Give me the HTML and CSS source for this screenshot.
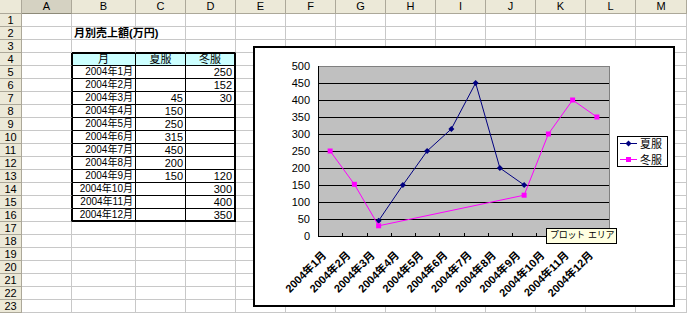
FILE: index.html
```html
<!DOCTYPE html>
<html lang="ja">
<head>
  <meta charset="UTF-8">
  <title>月別売上額</title>
  <link rel="stylesheet" href="styles.css">
</head>
<body>

  <div class="sheet" id="sheet"></div>

  <div class="chart">
    <svg id="plot" width="418" height="257"></svg>
    <div class="tip">プロット エリア</div>
  </div>

  <script src="script.js"></script>
</body>
</html>
```

FILE: styles.css
```css
* {
  box-sizing: border-box;
}

body {
  margin: 0;
  font-family: "Liberation Sans", "Noto Sans CJK JP", sans-serif;
  font-size: 11px;
  color: #000;
  background: #fff;
  overflow: hidden;
}

.sheet {
  display: grid;
  grid-template-columns: 22px 50px 64px repeat(10, 50px) 51px;
  grid-template-rows: 14px repeat(23, 13px);
}

.cell {
  border-right: 1px solid #c8c8c8;
  border-bottom: 1px solid #c8c8c8;
  line-height: 12px;
  padding: 0 2px;
  white-space: nowrap;
  overflow: hidden;
}

.corner,
.colhead,
.rowhead {
  background: #ece9d8;
  border-right: 1px solid #aca899;
  border-bottom: 1px solid #aca899;
  text-align: center;
  line-height: 12px;
}

.colhead.sel {
  background: #d5d2c2;
  border-bottom-color: #8d8a78;
}

.title {
  font-weight: bold;
  overflow: visible;
}

.num {
  text-align: right;
}

.date {
  font-size: 10px;
}

.head {
  background: #ccffff;
  text-align: center;
}

/* data block B4:D16 */
.tb {
  border-right-color: #000;
  border-bottom-color: #000;
}

.tl {
  box-shadow: inset 1px 0 0 #000;
}

.tt {
  box-shadow: inset 0 1px 0 #000;
}

.tl.tt {
  box-shadow: inset 1px 1px 0 #000;
}

.tr {
  border-right-width: 2px;
}

.tbot {
  border-bottom-width: 2px;
}

.edge-r {
  border-right-color: #000;
}

.edge-b {
  border-bottom-color: #000;
}

/* embedded chart object */
.chart {
  position: absolute;
  left: 253px;
  top: 46px;
  width: 422px;
  height: 261px;
  border: 2px solid #000;
  background: #fff;
}

.chart svg {
  display: block;
  font-family: "Liberation Sans", "Noto Sans CJK JP", sans-serif;
  font-size: 11px;
}

.chart .cat {
  font-weight: bold;
}

.tip {
  position: absolute;
  left: 291px;
  top: 180px;
  width: 71px;
  height: 16px;
  background: #ffffe1;
  border: 1px solid #000;
  font-size: 9px;
  letter-spacing: -0.3px;
  word-spacing: 1px;
  line-height: 13px;
  padding-left: 3px;
  white-space: nowrap;
}
```

FILE: script.js
```js
const COLS = ["A", "B", "C", "D", "E", "F", "G", "H", "I", "J", "K", "L", "M"];
const ROWS = 23;

const months = [];
for (let m = 1; m <= 12; m++) months.push("2004年" + m + "月");
const summer = [null, null, 45, 150, 250, 315, 450, 200, 150, null, null, null];
const winter = [250, 152, 30, null, null, null, null, null, 120, 300, 400, 350];

// cell contents
const cells = {
  B2: { text: "月別売上額(万円)", cls: "title" },
  B4: { text: "月", cls: "head" },
  C4: { text: "夏服", cls: "head" },
  D4: { text: "冬服", cls: "head" }
};
months.forEach((m, i) => {
  const r = i + 5;
  cells["B" + r] = { text: m, cls: "num date" };
  if (summer[i] !== null) cells["C" + r] = { text: summer[i], cls: "num" };
  if (winter[i] !== null) cells["D" + r] = { text: winter[i], cls: "num" };
});

const sheet = document.getElementById("sheet");

function add(text, cls) {
  const d = document.createElement("div");
  d.className = cls;
  d.textContent = text;
  sheet.appendChild(d);
}

add("", "corner");
COLS.forEach((c, i) => add(c, i === 0 ? "colhead sel" : "colhead"));

for (let r = 1; r <= ROWS; r++) {
  add(r, "rowhead");
  COLS.forEach(c => {
    const info = cells[c + r] || {};
    let cls = "cell";
    if (info.cls) cls += " " + info.cls;

    const inTable = r >= 4 && r <= 16 && "BCD".includes(c);
    if (inTable) {
      cls += " tb";
      if (c === "B") cls += " tl";
      if (r === 4) cls += " tt";
      if (c === "D") cls += " tr";
      if (r === 16) cls += " tbot";
    }
    if (c === "A" && r >= 4 && r <= 16) cls += " edge-r";
    if (r === 3 && "BCD".includes(c)) cls += " edge-b";

    add(info.text === undefined ? "" : info.text, cls);
  });
}

// chart
const NS = "http://www.w3.org/2000/svg";
const svg = document.getElementById("plot");

function el(name, attrs, text) {
  const e = document.createElementNS(NS, name);
  for (const k in attrs) e.setAttribute(k, attrs[k]);
  if (text !== undefined) e.textContent = text;
  svg.appendChild(e);
  return e;
}

const px0 = 63, px1 = 354, py0 = 18, py1 = 188;
const step = (px1 - px0) / 12;
const yOf = v => py1 - v * (py1 - py0) / 500;
const xOf = i => px0 + step * (i + 0.5);
const crisp = v => Math.round(v) + 0.5;

el("rect", { x: px0 + 0.5, y: py0 + 0.5, width: px1 - px0, height: py1 - py0, fill: "#c0c0c0", stroke: "#808080" });

for (let v = 50; v < 500; v += 50) {
  const y = crisp(yOf(v));
  el("line", { x1: px0, x2: px1, y1: y, y2: y, stroke: "#000" });
}

el("line", { x1: px0 + 0.5, x2: px0 + 0.5, y1: py0, y2: py1 + 1, stroke: "#000" });
el("line", { x1: px0, x2: px1 + 1, y1: py1 + 0.5, y2: py1 + 0.5, stroke: "#000" });

for (let i = 1; i <= 12; i++) {
  const x = crisp(px0 + step * i);
  el("line", { x1: x, x2: x, y1: py1 - 3, y2: py1 + 1, stroke: "#000" });
}

for (let v = 0; v <= 500; v += 50) {
  el("text", { x: 55, y: Math.round(yOf(v)) + 4, "text-anchor": "end" }, v);
}

months.forEach((m, i) => {
  const x = xOf(i) - 3;
  const y = 208;
  el("text", { class: "cat", x: x, y: y, "text-anchor": "end", transform: "rotate(-45 " + x + " " + y + ")" }, m);
});

function series(data, color, marker) {
  const pts = [];
  data.forEach((v, i) => {
    if (v !== null) pts.push([xOf(i), yOf(v)]);
  });
  el("polyline", { points: pts.map(p => p.join(",")).join(" "), fill: "none", stroke: color });
  pts.forEach(p => drawMarker(p[0], p[1], color, marker));
}

function drawMarker(x, y, color, marker) {
  if (marker === "diamond") {
    el("polygon", { points: [x, y - 3, x + 3, y, x, y + 3, x - 3, y].join(" "), fill: color });
  } else {
    el("rect", { x: x - 2.5, y: y - 2.5, width: 5, height: 5, fill: color });
  }
}

series(summer, "#000080", "diamond");
series(winter, "#ff00ff", "square");

// legend
el("rect", { x: 362.5, y: 88.5, width: 50, height: 30, fill: "#fff", stroke: "#000" });
[["夏服", "#000080", "diamond", 95.5], ["冬服", "#ff00ff", "square", 111.5]].forEach(item => {
  const y = item[3];
  el("line", { x1: 365, x2: 382, y1: y, y2: y, stroke: item[1] });
  drawMarker(373.5, y, item[1], item[2]);
  el("text", { x: 385, y: y + 4 }, item[0]);
});
```
